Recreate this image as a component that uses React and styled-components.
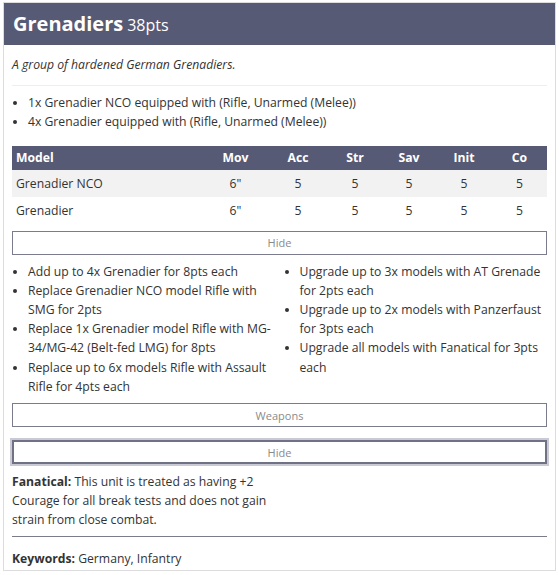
import styled, { createGlobalStyle } from 'styled-components';

const GlobalStyle = createGlobalStyle`
  body {
    margin: 0;
    font-family: "Open Sans", "Noto Sans", sans-serif;
    color: #333;
    background: #fff;
  }
  * { box-sizing: border-box; }
`;

const columns = [
  { key: 'name', label: 'Model', w: 191, left: true },
  { key: 'mov', label: 'Mov', w: 65 },
  { key: 'acc', label: 'Acc', w: 60 },
  { key: 'str', label: 'Str', w: 54 },
  { key: 'sav', label: 'Sav', w: 54 },
  { key: 'init', label: 'Init', w: 56 },
  { key: 'co', label: 'Co', w: 55 },
];

const models = [
  { name: 'Grenadier NCO', mov: '6"', acc: 5, str: 5, sav: 5, init: 5, co: 5 },
  { name: 'Grenadier', mov: '6"', acc: 5, str: 5, sav: 5, init: 5, co: 5 },
];

const upgradesLeft = [
  'Add up to 4x Grenadier for 8pts each',
  'Replace Grenadier NCO model Rifle with SMG for 2pts',
  'Replace 1x Grenadier model Rifle with MG-34/MG-42 (Belt-fed LMG) for 8pts',
  'Replace up to 6x models Rifle with Assault Rifle for 4pts each',
];

const upgradesRight = [
  'Upgrade up to 3x models with AT Grenade for 2pts each',
  'Upgrade up to 2x models with Panzerfaust for 3pts each',
  'Upgrade all models with Fanatical for 3pts each',
];

export default function App() {
  return (
    <>
      <GlobalStyle />
      <Page>
        <Card>
          <Header>
            <Title>Grenadiers</Title>
            <Points>38pts</Points>
          </Header>
          <Body>
            <Description>A group of hardened German Grenadiers.</Description>
            <Rule />
            <List>
              <li>1x Grenadier NCO equipped with (Rifle, Unarmed (Melee))</li>
              <li>4x Grenadier equipped with (Rifle, Unarmed (Melee))</li>
            </List>
            <Table>
              <thead>
                <tr>
                  {columns.map((c) => (
                    <Th key={c.key} $w={c.w} $left={c.left}>{c.label}</Th>
                  ))}
                </tr>
              </thead>
              <tbody>
                {models.map((m) => (
                  <Row key={m.name}>
                    {columns.map((c) => (
                      <Td key={c.key} $left={c.left}>{m[c.key]}</Td>
                    ))}
                  </Row>
                ))}
              </tbody>
            </Table>
            <ToggleButton>Hide</ToggleButton>
            <Columns>
              <List>
                {upgradesLeft.map((u) => <li key={u}>{u}</li>)}
              </List>
              <List>
                {upgradesRight.map((u) => <li key={u}>{u}</li>)}
              </List>
            </Columns>
            <ToggleButton>Weapons</ToggleButton>
            <ToggleButton $focused>Hide</ToggleButton>
            <Rules>
              <b>Fanatical:</b> This unit is treated as having +2 Courage for all break tests and does not gain strain from close combat.
            </Rules>
            <DarkRule />
            <Keywords>
              <b>Keywords:</b> Germany, Infantry
            </Keywords>
          </Body>
        </Card>
      </Page>
    </>
  );
}

const Page = styled.div`
  padding: 2px 3px;
`;

const Card = styled.div`
  width: 553px;
  border: 1px solid #dcdcdc;
  background: #fff;
`;

const Header = styled.div`
  background: #575a75;
  color: #fff;
  height: 42px;
  padding: 0 9px;
  display: flex;
  align-items: baseline;
  gap: 4px;
  line-height: 42px;
`;

const Title = styled.span`
  font-size: 20px;
  font-weight: 700;
`;

const Points = styled.span`
  font-size: 16px;
`;

const Body = styled.div`
  padding: 8px 8px 2px;
  font-size: 12.2px;
  line-height: 19.2px;
`;

const Description = styled.p`
  margin: 2px 0 0;
  font-style: italic;
`;

const Rule = styled.hr`
  border: 0;
  border-top: 1px solid #eeeeee;
  margin: 11px 0 7px;
`;

const DarkRule = styled.hr`
  border: 0;
  border-top: 1px solid #7a7b8c;
  margin: 6px 0 12px;
`;

const List = styled.ul`
  margin: 0;
  padding-left: 16px;
`;

const Table = styled.table`
  width: 100%;
  border-collapse: collapse;
  table-layout: fixed;
  margin-top: 14px;
`;

const Th = styled.th`
  width: ${(p) => p.$w}px;
  background: #575a75;
  color: #fff;
  font-weight: 700;
  height: 24px;
  padding: 0 4px;
  text-align: ${(p) => (p.$left ? 'left' : 'center')};
`;

const Row = styled.tr`
  &:nth-child(odd) { background: #f2f2f2; }
`;

const Td = styled.td`
  height: 27px;
  padding: 0 4px;
  text-align: ${(p) => (p.$left ? 'left' : 'center')};
`;

const ToggleButton = styled.button`
  display: block;
  width: 100%;
  height: 24px;
  margin-top: ${(p) => (p.$focused ? '13px' : '7px')};
  background: #fff;
  border: ${(p) => (p.$focused ? '2px solid #6f7185' : '1px solid #7a7b8c')};
  box-shadow: ${(p) => (p.$focused ? '0 0 0 2px #c9cad3' : 'none')};
  color: #8a8a8a;
  font-family: inherit;
  font-size: 11px;
`;

const Columns = styled.div`
  display: grid;
  grid-template-columns: 1fr 1fr;
  gap: 8px;
  margin-top: 7px;
`;

const Rules = styled.p`
  margin: 8px 0 0;
  width: 272px;
`;

const Keywords = styled.div``;
